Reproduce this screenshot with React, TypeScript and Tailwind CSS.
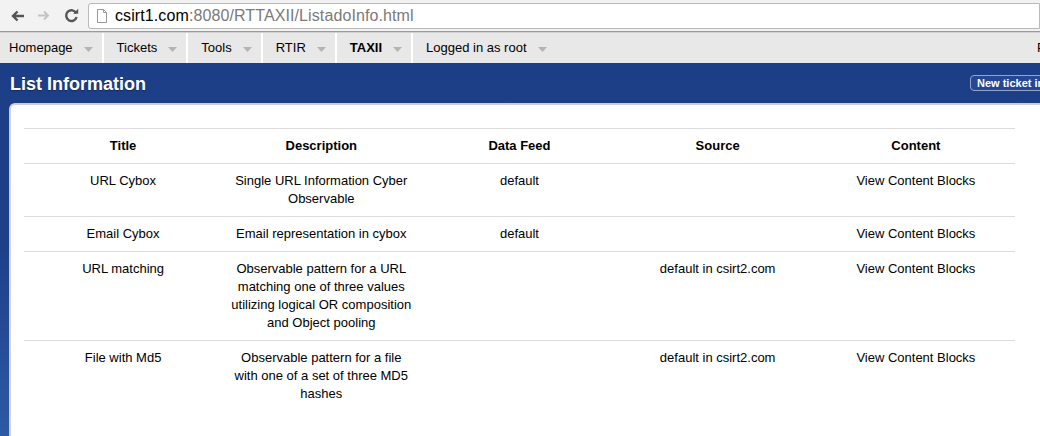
const menu = [
  { label: "Homepage" },
  { label: "Tickets" },
  { label: "Tools" },
  { label: "RTIR" },
  { label: "TAXII", bold: true },
  { label: "Logged in as root" },
];

const rows = [
  {
    title: "URL Cybox",
    description: "Single URL Information Cyber Observable",
    feed: "default",
    source: "",
  },
  {
    title: "Email Cybox",
    description: "Email representation in cybox",
    feed: "default",
    source: "",
  },
  {
    title: "URL matching",
    description:
      "Observable pattern for a URL matching one of three values utilizing logical OR composition and Object pooling",
    feed: "",
    source: "default in csirt2.com",
  },
  {
    title: "File with Md5",
    description: "Observable pattern for a file with one of a set of three MD5 hashes",
    feed: "",
    source: "default in csirt2.com",
  },
];

function Caret() {
  return (
    <svg width="9" height="5" viewBox="0 0 9 5" className="ml-[11px] mt-[2px]">
      <path d="M0 0h9L4.5 5z" fill="#b4b4b4" />
    </svg>
  );
}

export default function App() {
  return (
    <div className="w-[1040px] h-[436px] overflow-hidden bg-white font-['Liberation_Sans',Arial,sans-serif] text-[13px] text-black">
      {/* browser toolbar */}
      <div className="h-[32px] bg-[#f2f2f2] flex items-center border-b border-[#9a9a9a]">
        <div className="flex items-center gap-[13px] pl-[10px] w-[88px]">
          <svg width="15" height="12" viewBox="0 0 15 12">
            <path d="M14 6H3M7.5 1.5 3 6l4.5 4.5" fill="none" stroke="#555" strokeWidth="2.4" />
          </svg>
          <svg width="13" height="11" viewBox="0 0 13 11">
            <path d="M0 5.5h10M6 1.5l4 4-4 4" fill="none" stroke="#c4c4c4" strokeWidth="2" />
          </svg>
          <svg width="15" height="15" viewBox="0 0 15 15">
            <path d="M12.2 5.2A5.3 5.3 0 1 0 12.6 9" fill="none" stroke="#555" strokeWidth="2.4" />
            <path d="M9.2 5.8h5V0.8z" fill="#555" />
          </svg>
        </div>
        <div className="flex-1 h-[26px] bg-white border border-[#b9b9b9] rounded-l-[3px] flex items-center">
          <svg width="12" height="14" viewBox="0 0 12 14" className="ml-[7px] mr-[7px]">
            <path d="M1.5.5h6l3 3v10h-9z" fill="#fff" stroke="#999" />
            <path d="M7.5.5v3h3" fill="none" stroke="#999" />
          </svg>
          <span className="text-[16px] tracking-[0.1px]">
            csirt1.com<span className="text-[#7a7a7a]">:8080/RTTAXII/ListadoInfo.html</span>
          </span>
        </div>
      </div>

      {/* RT menu */}
      <div className="h-[31px] bg-[#e8e8e8] border-t border-[#d0d0d0] flex items-center justify-between">
        <div className="flex h-full">
          {menu.map((m) => (
            <div
              key={m.label}
              className="flex items-center h-full pl-[13px] pr-[9px] border-r-2 border-white first:pl-[9px] last:border-r-0"
            >
              <span className={m.bold ? "font-bold" : ""}>{m.label}</span>
              <Caret />
            </div>
          ))}
        </div>
        <div className="w-[3px] whitespace-nowrap">Preferences</div>
      </div>

      {/* page body */}
      <div className="h-[373px] bg-gradient-to-b from-[#1c3e87] via-[#1d4089] to-[#2f59a5]">
        <div className="h-[40px] flex items-center justify-between pl-[10px]">
          <h1 className="text-[18px] font-bold text-white [text-shadow:0_1px_1px_rgba(0,0,0,0.35)] pt-[2px]">
            List Information
          </h1>
          <div className="w-[70px] whitespace-nowrap">
            <span className="inline-block text-[11px] font-bold text-white leading-[14px] px-[6px] border-[1.5px] border-[#95a3c6] rounded-[4px] bg-[#264894]">
              New ticket in
            </span>
          </div>
        </div>

        <div className="ml-[9px] h-[333px] bg-white border-l-2 border-t-2 border-[#cfcfcf] rounded-tl-[6px] pl-[13px] pr-[25px] pt-[23px]">
          <table className="w-full table-fixed border-collapse text-center leading-[18px]">
            <thead>
              <tr className="border-t border-b border-[#dcdcdc]">
                {["Title", "Description", "Data Feed", "Source", "Content"].map((h) => (
                  <th key={h} className="font-bold py-[8px] px-[4px]">
                    {h}
                  </th>
                ))}
              </tr>
            </thead>
            <tbody>
              {rows.map((r) => (
                <tr key={r.title} className="border-b border-[#dcdcdc] last:border-b-0 align-top">
                  <td className="pt-[8px] pb-[8px] px-[4px]">{r.title}</td>
                  <td className="pt-[8px] pb-[8px] px-[4px]">
                    <div className="mx-auto max-w-[186px]">{r.description}</div>
                  </td>
                  <td className="pt-[8px] pb-[8px] px-[4px]">{r.feed}</td>
                  <td className="pt-[8px] pb-[8px] px-[4px]">{r.source}</td>
                  <td className="pt-[8px] pb-[8px] px-[4px]">View Content Blocks</td>
                </tr>
              ))}
            </tbody>
          </table>
        </div>
      </div>
    </div>
  );
}
